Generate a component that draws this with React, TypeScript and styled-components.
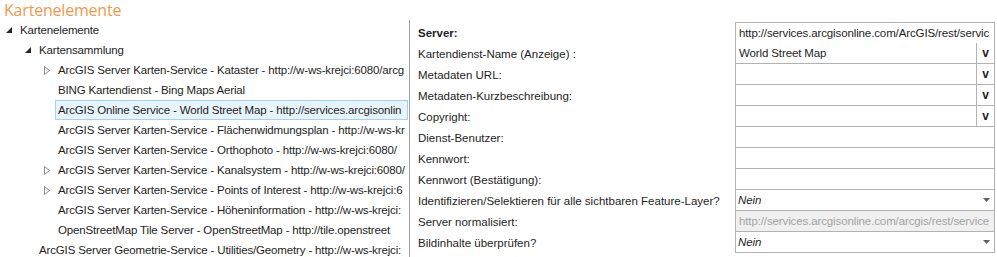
import { Fragment } from "react";
import styled, { createGlobalStyle } from "styled-components";

const GlobalStyle = createGlobalStyle`
  html, body {
    margin: 0;
    padding: 0;
    background: #ffffff;
  }
  body {
    font-family: "Liberation Sans", Arial, sans-serif;
    font-size: 11.5px;
    color: #1e1e1e;
  }
`;

const Page = styled.div`
  width: 997px;
  height: 257px;
  overflow: hidden;
  display: flex;
  flex-direction: column;
`;

const Title = styled.div`
  height: 20px;
  line-height: 20px;
  padding-left: 4px;
  font-family: "Open Sans", sans-serif;
  font-size: 16px;
  color: #ee9a4d;
  letter-spacing: -0.2px;
`;

const Body = styled.div`
  flex: 1;
  display: flex;
  min-height: 0;
`;

const TreePanel = styled.div`
  width: 408px;
  padding-right: 1px;
  border-right: 1px solid #a0a0a0;
  overflow: hidden;
  display: flex;
  flex-direction: column;
`;

const TreeRow = styled.div<{ $level: number }>`
  height: 20px;
  display: flex;
  align-items: center;
  padding-left: ${(p) => 6 + p.$level * 19}px;
`;

const Expander = styled.span`
  width: 14px;
  flex: none;
  display: flex;
  align-items: center;
`;

const TreeText = styled.span<{ $selected?: boolean }>`
  flex: 1;
  min-width: 0;
  white-space: nowrap;
  overflow: hidden;
  height: 20px;
  line-height: 18px;
  box-sizing: border-box;
  margin-left: -3px;
  padding-left: 2px;
  letter-spacing: -0.15px;
  border: 1px solid ${(p) => (p.$selected ? "#9fd3f1" : "transparent")};
  background: ${(p) => (p.$selected ? "#e8f4fc" : "transparent")};
`;

const PropertyPanel = styled.div`
  flex: 1;
  padding: 2px 2px 0 8px;
  display: grid;
  grid-template-columns: 317px 1fr;
  grid-auto-rows: 21px;
  align-content: start;
`;

const Label = styled.div<{ $bold?: boolean }>`
  display: flex;
  align-items: center;
  font-weight: ${(p) => (p.$bold ? 700 : 400)};
  white-space: nowrap;
`;

const Field = styled.div<{ $first?: boolean; $disabled?: boolean }>`
  display: flex;
  align-items: stretch;
  box-sizing: border-box;
  height: ${(p) => (p.$first ? 22 : 21)}px;
  border: 1px solid #b2b2b2;
  border-top: ${(p) => (p.$first ? "1px solid #b2b2b2" : "none")};
  background: ${(p) => (p.$disabled ? "#f0f0f0" : "#ffffff")};
  color: ${(p) => (p.$disabled ? "#a3a3a3" : "#1e1e1e")};
  overflow: hidden;
`;

const FieldText = styled.span<{ $italic?: boolean }>`
  flex: 1;
  min-width: 0;
  display: flex;
  align-items: center;
  padding-left: ${(p) => (p.$italic ? 2 : 3)}px;
  white-space: nowrap;
  overflow: hidden;
  letter-spacing: -0.12px;
  font-style: ${(p) => (p.$italic ? "italic" : "normal")};
`;

const VButton = styled.span`
  width: 17px;
  flex: none;
  border-left: 1px solid #b2b2b2;
  display: flex;
  align-items: center;
  justify-content: center;
  font-weight: 700;
  font-size: 12px;
  color: #1e1e1e;
`;

const DropArrow = styled.span`
  width: 16px;
  flex: none;
  display: flex;
  align-items: center;
  justify-content: center;
`;

const ExpandedIcon = () => (
  <svg width="6" height="6" viewBox="0 0 6 6">
    <polygon points="6,0 6,6 0,6" fill="#262626" />
  </svg>
);

const CollapsedIcon = () => (
  <svg width="6" height="9" viewBox="0 0 6 9">
    <polygon points="0.5,0.5 5.5,4.5 0.5,8.5" fill="none" stroke="#8c8c8c" strokeWidth="1" />
  </svg>
);

const ArrowIcon = () => (
  <svg width="7" height="4" viewBox="0 0 7 4">
    <polygon points="0,0 7,0 3.5,4" fill="#606060" />
  </svg>
);

type Node = { level: number; text: string; expander?: "open" | "closed"; selected?: boolean };

const tree: Node[] = [
  { level: 0, text: "Kartenelemente", expander: "open" },
  { level: 1, text: "Kartensammlung", expander: "open" },
  { level: 2, text: "ArcGIS Server Karten-Service - Kataster - http://w-ws-krejci:6080/arcg", expander: "closed" },
  { level: 2, text: "BING Kartendienst - Bing Maps Aerial" },
  { level: 2, text: "ArcGIS Online Service - World Street Map - http://services.arcgisonlin", selected: true },
  { level: 2, text: "ArcGIS Server Karten-Service - Flächenwidmungsplan - http://w-ws-kr" },
  { level: 2, text: "ArcGIS Server Karten-Service - Orthophoto - http://w-ws-krejci:6080/" },
  { level: 2, text: "ArcGIS Server Karten-Service - Kanalsystem - http://w-ws-krejci:6080/", expander: "closed" },
  { level: 2, text: "ArcGIS Server Karten-Service - Points of Interest - http://w-ws-krejci:6", expander: "closed" },
  { level: 2, text: "ArcGIS Server Karten-Service - Höheninformation - http://w-ws-krejci:" },
  { level: 2, text: "OpenStreetMap Tile Server - OpenStreetMap - http://tile.openstreet" },
  { level: 1, text: "ArcGIS Server Geometrie-Service - Utilities/Geometry - http://w-ws-krejci:" },
];

type Prop = {
  label: string;
  bold?: boolean;
  kind: "text" | "button" | "combo" | "disabled";
  value?: string;
};

const props: Prop[] = [
  { label: "Server:", bold: true, kind: "text", value: "http://services.arcgisonline.com/ArcGIS/rest/servic" },
  { label: "Kartendienst-Name (Anzeige) :", kind: "button", value: "World Street Map" },
  { label: "Metadaten URL:", kind: "button" },
  { label: "Metadaten-Kurzbeschreibung:", kind: "button" },
  { label: "Copyright:", kind: "button" },
  { label: "Dienst-Benutzer:", kind: "text" },
  { label: "Kennwort:", kind: "text" },
  { label: "Kennwort (Bestätigung):", kind: "text" },
  { label: "Identifizieren/Selektieren für alle sichtbaren Feature-Layer?", kind: "combo", value: "Nein" },
  { label: "Server normalisiert:", kind: "disabled", value: "http://services.arcgisonline.com/arcgis/rest/service" },
  { label: "Bildinhalte überprüfen?", kind: "combo", value: "Nein" },
];

export default function App() {
  return (
    <Page>
      <GlobalStyle />
      <Title>Kartenelemente</Title>
      <Body>
        <TreePanel>
          {tree.map((n, i) => (
            <TreeRow key={i} $level={n.level}>
              <Expander>
                {n.expander === "open" && <ExpandedIcon />}
                {n.expander === "closed" && <CollapsedIcon />}
              </Expander>
              <TreeText $selected={n.selected}>{n.text}</TreeText>
            </TreeRow>
          ))}
        </TreePanel>
        <PropertyPanel>
          {props.map((p, i) => (
            <Fragment key={i}>
              <Label $bold={p.bold}>{p.label}</Label>
              <Field $first={i === 0} $disabled={p.kind === "disabled"}>
                <FieldText $italic={p.kind === "combo"}>{p.value}</FieldText>
                {p.kind === "button" && <VButton>v</VButton>}
                {p.kind === "combo" && (
                  <DropArrow>
                    <ArrowIcon />
                  </DropArrow>
                )}
              </Field>
            </Fragment>
          ))}
        </PropertyPanel>
      </Body>
    </Page>
  );
}
